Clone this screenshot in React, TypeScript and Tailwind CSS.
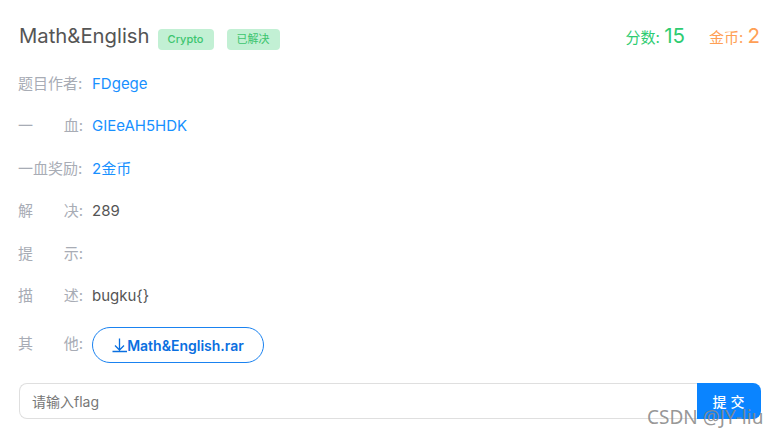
const font = "[font-family:Inter,'Noto_Sans_CJK_SC',sans-serif]"

function Row({ label, children }: { label: string; children?: React.ReactNode }) {
  const chars = label.split('')
  return (
    <div className="flex h-[42.4px] items-center">
      <div className="flex w-[65px] justify-between text-[15px] text-[#a8acb5]">
        {chars.length === 2 ? (
          <>
            <span>{chars[0]}</span>
            <span>{chars[1]}:</span>
          </>
        ) : (
          <span className="whitespace-nowrap">{label}:</span>
        )}
      </div>
      <div className="ml-[9px] text-[15px]">{children}</div>
    </div>
  )
}

export default function App() {
  return (
    <main className={`h-[437px] w-[778px] overflow-hidden bg-white relative ${font}`}>
      <div className="flex h-[63px] items-center justify-between pl-[19px] pr-[18px] pt-[10px]">
        <div className="flex items-center">
          <h1 className="text-[20.3px] font-normal text-[#555]">Math&amp;English</h1>
          <span className="ml-[8px] mt-[6px] flex h-[21px] w-[56px] items-center justify-center rounded-[4px] bg-[#c2f0d4] text-[11px] font-medium text-[#3cc56f]">Crypto</span>
          <span className="ml-[13px] mt-[6px] flex h-[21px] w-[53px] items-center justify-center rounded-[4px] bg-[#c2f0d4] text-[11px] text-[#3cc56f]">已解决</span>
        </div>
        <div className="flex items-baseline text-[15px]">
          <span className="text-[#2ecc71]">分数: <span className="text-[20.5px]">15</span></span>
          <span className="ml-[24px] text-[#ff9f55]">金币: <span className="text-[20.5px]">2</span></span>
        </div>
      </div>

      <div className="pl-[18px]">
        <Row label="题目作者"><span className="text-[#1890ff]">FDgege</span></Row>
        <Row label="一血"><span className="text-[#1890ff]">GIEeAH5HDK</span></Row>
        <Row label="一血奖励"><span className="text-[#1890ff]">2金币</span></Row>
        <Row label="解决"><span className="text-[#555]">289</span></Row>
        <Row label="提示" />
        <Row label="描述"><span className="text-[#555]">bugku{'{}'}</span></Row>
        <div className="mt-[10px] flex h-[36px] items-center">
          <div className="flex w-[65px] justify-between text-[15px] text-[#a8acb5] -mt-[2px]">
            <span>其</span>
            <span>他:</span>
          </div>
          <button className="ml-[9px] flex h-[36px] w-[172px] items-center justify-center rounded-full border border-[#1a82f0] bg-white text-[14px] font-semibold text-[#0a6fe0]">
            <svg width="15" height="16" viewBox="0 0 15 16" fill="none" stroke="currentColor" strokeWidth="1.3">
              <path d="M7.5 1.5V13M3 8.5l4.5 4.5L12 8.5M0.5 14.5H15" />
            </svg>
            <span>Math&amp;English.rar</span>
          </button>
        </div>
      </div>

      <div className="ml-[19px] mr-[17px] mt-[20px] flex h-[36px]">
        <div className="flex flex-1 items-center rounded-l-[8px] border border-r-0 border-[#dfdfdf] pl-[12px] text-[14px] text-[#777]">
          请输入flag
        </div>
        <button className="flex w-[64px] items-center justify-center rounded-r-[8px] bg-[#0a84ff] pl-[3px] text-[14px] font-medium tracking-[4px] text-white">
          提交
        </button>
      </div>

      <div className="absolute left-[647px] top-[405px] font-['Noto_Sans'] text-[19px] leading-[24px] text-[#8a8a8a]/90">
        CSDN @JY-liu
      </div>
    </main>
  )
}
